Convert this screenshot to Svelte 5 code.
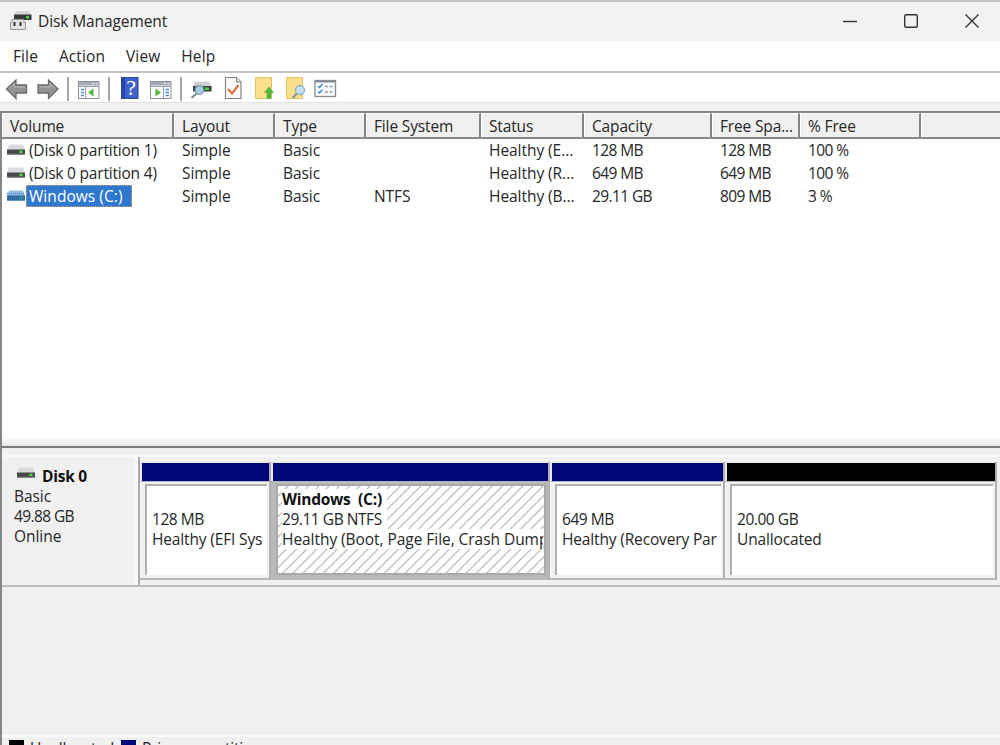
<script>
  const menus = [
    { label: 'File', left: 0 },
    { label: 'Action', left: 21 },
    { label: 'View', left: 21 },
    { label: 'Help', left: 21 },
  ]

  const tools = ['back', 'forward', '|', 'tree', '|', 'help', 'pane', '|', 'rescan', 'check', 'up', 'find', 'list']

  const columns = ['Volume', 'Layout', 'Type', 'File System', 'Status', 'Capacity', 'Free Spa...', '% Free', '']

  const volumes = [
    ['(Disk 0 partition 1)', 'Simple', 'Basic', '', 'Healthy (E...', '128 MB', '128 MB', '100 %', ''],
    ['(Disk 0 partition 4)', 'Simple', 'Basic', '', 'Healthy (R...', '649 MB', '649 MB', '100 %', ''],
    ['Windows (C:)', 'Simple', 'Basic', 'NTFS', 'Healthy (B...', '29.11 GB', '809 MB', '3 %', ''],
  ]

  const partitions = [
    { name: '', size: '128 MB', status: 'Healthy (EFI Sys', width: 131 },
    { name: 'Windows  (C:)', size: '29.11 GB NTFS', status: 'Healthy (Boot, Page File, Crash Dump', width: 279 },
    { name: '', size: '649 MB', status: 'Healthy (Recovery Par', width: 175 },
    { name: '', size: '20.00 GB', status: 'Unallocated', width: 272, free: true },
  ]

  let selected = $state(2)
</script>

{#snippet drive(active)}
  <svg class="drive" width="18" height="12" viewBox="0 0 18 12">
    <path d="M2 0.5h14L18 6H0z" fill={active ? '#8fb9df' : '#d9dade'} />
    <rect y="5.5" width="18" height="5" fill={active ? '#2b6597' : '#46484a'} />
    <rect y="9.6" width="18" height="1" fill={active ? '#3f82bd' : '#777'} />
    <rect x="12.5" y="6.600" width="3" height="2.4" fill={active ? '#239a93' : '#4fe04a'} />
    {#if active}
      <path d="M0 3.5h18M0 7.5h18" stroke="#3c8ad2" stroke-width="1" stroke-dasharray="1 1" />
    {/if}
  </svg>
{/snippet}

<div class="window">
  <header class="title">
    <svg width="22" height="21" viewBox="0 0 22 21">
      <path d="M6 1h13l2.5 4H4z" fill="#d5d6d8" />
      <rect x="4" y="4.500" width="17.500" height="5.500" fill="#37393a" />
      <rect x="16" y="6" width="3" height="2.500" fill="#43d84a" />
      <path d="M2 9.500h12v3h1.500v7H0.500v-7H2z" fill="#e3e3e3" stroke="#9a9a9a" />
      <path d="M4.500 12v4M10.500 12v4" stroke="#333" stroke-width="2" />
    </svg>
    <h1>Disk Management</h1>
    <div class="controls">
      <svg width="16" height="16" viewBox="0 0 16 16"><path d="M1 8.500h14" /></svg>
      <svg width="16" height="16" viewBox="0 0 16 16"><rect x="1.700" y="1.700" width="12.600" height="12.600" rx="1.500" /></svg>
      <svg width="16" height="16" viewBox="0 0 16 16"><path d="M1.500 1.500l13 13M14.500 1.500l-13 13" /></svg>
    </div>
  </header>

  <nav class="menu">
    {#each menus as m}
      <span style:margin-left="{m.left}px">{m.label}</span>
    {/each}
  </nav>

  <div class="toolbar">
    {#each tools as tool}
      {#if tool === '|'}
        <i class="sep"></i>
      {:else}
        <svg width="31" height="30" viewBox="0 0 31 30">
          {#if tool === 'back'}
            <path d="M5.500 16L15 7v5h10.500v8H15v5.500z" fill="#949494" stroke="#686868" stroke-width="1.300" />
            <path d="M8 15.500l5.500-5v3.500H24" fill="none" stroke="#b9b9b9" />
          {:else if tool === 'forward'}
            <path d="M26 16L16.500 7v5H6v8h10.500v5.500z" fill="#949494" stroke="#686868" stroke-width="1.300" />
            <path d="M7.500 14h10.500v-3.500l5 5" fill="none" stroke="#b9b9b9" />
          {:else if tool === 'tree'}
            <rect x="5.500" y="8.500" width="20.500" height="17" fill="#fafbfc" stroke="#8d929c" />
            <rect x="6" y="9" width="19.500" height="3.500" fill="#a4aab6" />
            <path d="M19 10.500h2M22.500 10.500h2" stroke="#eef0f4" />
            <path d="M6 13.500h19.500M12.500 14v11" stroke="#9aa0aa" />
            <path d="M8 16.500h3M8 19.500h3M8 22.500h3" stroke="#4d8ed0" stroke-width="1.500" />
            <path d="M20.500 15.500v8l-5.500-4z" fill="#55b535" />
          {:else if tool === 'help'}
            <rect x="7.500" y="4.500" width="16.500" height="21" fill="#3e62c9" stroke="#2a449f" />
            <rect x="8" y="5" width="3" height="20" fill="#2747ad" />
            <text x="17" y="22" class="question">?</text>
          {:else if tool === 'pane'}
            <rect x="5.500" y="8.500" width="20.500" height="17" fill="#fafbfc" stroke="#8d929c" />
            <rect x="6" y="9" width="19.500" height="3.500" fill="#a4aab6" />
            <path d="M19 10.500h2M22.500 10.500h2" stroke="#eef0f4" />
            <path d="M6 13.500h19.500M18.500 14v11" stroke="#9aa0aa" />
            <path d="M20.500 16.500h3.500M20.500 19.500h3.500M20.500 22.500h3.500" stroke="#4d8ed0" stroke-width="1.500" />
            <path d="M10.500 15.500v8l5.500-4z" fill="#55b535" />
          {:else if tool === 'rescan'}
            <path d="M9 8.500h14l2.500 5H7z" fill="#cfd1d4" />
            <rect x="7" y="13" width="18.500" height="5.500" fill="#3d4144" />
            <rect x="19" y="14.500" width="4" height="2.500" fill="#4bd646" />
            <path d="M10.500 20.500L5.500 25" stroke="#7e8a92" stroke-width="2.200" />
            <circle cx="13.500" cy="17" r="4.300" fill="#a9cbe3" stroke="#789ab2" stroke-width="1.300" />
          {:else if tool === 'check'}
            <path d="M8.500 4.500h11l4.500 4.500v16.500H8.500z" fill="#fafafa" stroke="#838383" stroke-width="1.200" />
            <path d="M19.500 4.500v4.500H24" fill="#ddd" stroke="#838383" />
            <path d="M11 16l4 4.500 6.500-8.500" fill="none" stroke="#e5703a" stroke-width="2.200" />
          {:else if tool === 'up'}
            <path d="M7.500 4.500h16v21h-16z" fill="#fae08a" stroke="#e3c262" />
            <path d="M21 14l4.500 5.500h-2.500v6h-4v-6h-2.500z" fill="#50b83c" stroke="#43a433" stroke-width="0.500" />
          {:else if tool === 'find'}
            <path d="M7.500 4.500h16v21h-16z" fill="#fae08a" stroke="#e3c262" />
            <path d="M18 20.500l-4.500 4.500" stroke="#8795a0" stroke-width="2.200" />
            <circle cx="21" cy="17" r="4.500" fill="#c5e0ef" stroke="#8fb0c5" stroke-width="1.300" />
          {:else if tool === 'list'}
            <rect x="5" y="7.500" width="20.500" height="16" fill="#fafbfc" stroke="#858b95" stroke-width="1.300" />
            <path d="M5 8.500h20.500" stroke="#858b95" stroke-width="2" />
            <path d="M8 13l1.500 1.500 3-3.500M8 18.500l1.500 1.500 3-3.500" fill="none" stroke="#3c90dc" stroke-width="1.500" />
            <path d="M15 13.500h3M19.500 13.500h3M15 19h3M19.500 19h3" stroke="#9aa0a8" stroke-width="1.300" />
          {/if}
        </svg>
      {/if}
    {/each}
  </div>

  <main>
    <section class="volumes">
      <div class="row head">
        {#each columns as column}
          <div class="th">{column}</div>
        {/each}
      </div>
      {#each volumes as volume, i}
        <div class="row" class:active={i === selected} onclick={() => (selected = i)} role="presentation">
          {#each volume as cell, j}
            {#if j === 0}
              <div class="td name">{@render drive(i === selected)}<span>{cell}</span></div>
            {:else}
              <div class="td" class:num={j > 4}>{cell}</div>
            {/if}
          {/each}
        </div>
      {/each}
    </section>

    <div class="splitter"></div>

    <section class="disks">
      <div class="disk">
        <div class="info">
          <div class="disk-name">{@render drive(false)}<b>Disk 0</b></div>
          <div>Basic</div>
          <div class="num">49.88 GB</div>
          <div>Online</div>
        </div>
        <div class="parts">
          {#each partitions as part}
            <div class="part" class:selected={part.name} style:width="{part.width}px">
              <div class="bar" class:free={part.free}></div>
              <div class="frame">
                <div class="box">
                  {#if part.name}
                    <svg class="hatch" width="100%" height="100%">
                      <pattern id="hatch" width="10.200" height="10.200" patternUnits="userSpaceOnUse">
                        <path d="M-1 11.200L11.200 -1M-1 1L1 -1M9.200 11.200l2-2" stroke="#a8a8a8" stroke-width="1" />
                      </pattern>
                      <rect width="100%" height="100%" fill="url(#hatch)" />
                    </svg>
                  {/if}
                  <div class="lines">
                    <b>{part.name}</b>
                    <span class="num">{part.size}</span>
                    <span>{part.status}</span>
                  </div>
                </div>
              </div>
            </div>
          {/each}
        </div>
      </div>
    </section>

    <footer>
      <i class="swatch"></i><span class="first">Unallocated</span>
      <i class="swatch primary"></i><span>Primary partition</span>
    </footer>
  </main>
</div>

<style>
  :global(body) {
    margin: 0;
    overflow: hidden;
  }

  .window {
    box-sizing: border-box;
    width: 1000px;
    height: 745px;
    display: flex;
    flex-direction: column;
    overflow: hidden;
    background: #f0f0f0;
    color: #262626;
    font: 15.5px/20px "Open Sans", "Noto Sans", sans-serif;
    letter-spacing: -0.05px;
    white-space: nowrap;
  }

  .window > *,
  main > * {
    flex-shrink: 0;
  }

  .title {
    box-sizing: border-box;
    height: 41px;
    display: flex;
    align-items: center;
    padding: 0 20px 2px 10px;
    border-top: 2px solid #c6c6c6;
    background: #f2f2f2;
  }

  h1 {
    margin: 0 0 0 6px;
    font-size: 15.5px;
    font-weight: 400;
    letter-spacing: -0.1px;
  }

  .controls {
    display: flex;
    gap: 45px;
    margin-left: auto;
  }

  .controls svg {
    fill: none;
    stroke: #333;
    stroke-width: 1.4;
  }

  .menu {
    display: flex;
    align-items: center;
    height: 30px;
    padding-left: 13px;
    background: #fff;
    letter-spacing: 0.1px;
  }

  .toolbar {
    box-sizing: border-box;
    height: 32px;
    display: flex;
    padding-left: 1px;
    border-top: 2px solid #c4c5c0;
    border-bottom: 1px solid #e2e2e2;
    background: #fff;
  }

  .sep {
    width: 2px;
    height: 24px;
    margin: 4px 4px 0;
    background: #a5a5a5;
  }

  .question {
    fill: #fff;
    font: 22px "Liberation Serif", serif;
    text-anchor: middle;
  }

  main {
    flex: 1;
    display: flex;
    flex-direction: column;
    margin-top: 8px;
    border-left: 2px solid #868686;
    border-top: 2px solid #868686;
  }

  .volumes {
    box-sizing: border-box;
    height: 325px;
    background: #fff;
  }

  .row {
    display: grid;
    grid-template-columns: 172px 101px 91px 115px 103px 128px 88px 121px 1fr;
    height: 22.7px;
    align-items: center;
  }

  .head {
    height: 26px;
    align-items: stretch;
    box-sizing: border-box;
    border-bottom: 2px solid #8a8a8a;
    background: #f0f0f0;
  }

  .th {
    padding: 2px 0 0 7px;
    border-right: 2px solid #858585;
    border-left: 1px solid #fff;
    border-top: 1px solid #fff;
    letter-spacing: -0.15px;
  }

  .th:last-child {
    border-right: 0;
  }

  .td {
    padding-left: 8px;
  }

  .num {
    letter-spacing: -0.6px;
  }

  .name {
    display: flex;
    align-items: center;
    padding-left: 5px;
    letter-spacing: -0.2px;
  }

  .name span {
    box-sizing: border-box;
    height: 22px;
    margin-left: 1px;
    padding: 0 7px 0 2px;
    border: 1px solid transparent;
  }

  .active .name span {
    padding-right: 8px;
    background: #2f78d0;
    border: 1px dotted #d9a066;
    color: #fff;
    letter-spacing: 0.05px;
  }

  .splitter {
    box-sizing: border-box;
    height: 10px;
    border-bottom: 2px solid #7c7c7c;
    background: linear-gradient(#fbfbfb, #f3f3f3 50%, #e6e6e6);
  }

  .disks {
    height: 287px;
    padding-top: 7px;
    box-sizing: border-box;
  }

  .disk {
    box-sizing: border-box;
    display: flex;
    height: 132px;
    border-top: 2px solid #f9f9f9;
    border-bottom: 2px solid #bcbcbc;
  }

  .info {
    box-sizing: border-box;
    width: 138px;
    padding: 8px 0 0 12px;
    border-right: 2px solid #a9a9a9;
    box-shadow: inset -4px 0 0 #f8f8f8;
  }

  .info .drive {
    margin: 0 7px 5px 3px;
  }

  .disk-name {
    display: flex;
    align-items: center;
    height: 21px;
  }

  b {
    color: #111;
    letter-spacing: -0.25px;
    white-space: pre;
  }

  .parts {
    display: flex;
    padding-top: 5px;
  }

  .part {
    box-sizing: border-box;
    height: 118px;
    border-right: 2px solid #b0b0b0;
    border-bottom: 2px solid #b9b9b9;
  }

  .bar {
    box-sizing: border-box;
    height: 19px;
    border: solid #e8e8e8;
    border-width: 1px 0 0 2px;
    background: #000779;
  }

  .free {
    background: #000;
  }

  .frame {
    box-sizing: border-box;
    height: 97px;
    padding: 2px 2px 3px 4px;
    border-top: 1px solid #b4b4b4;
    border-left: 1px solid #fafafa;
  }

  .box {
    box-sizing: border-box;
    height: 91px;
    display: grid;
    grid-template: 100% / 100%;
    overflow: hidden;
    border: solid #b0b0b0;
    border-width: 2px 0 0 2px;
    background: #fff;
  }

  .lines {
    display: flex;
    flex-direction: column;
    align-items: flex-start;
    grid-area: 1 / 1;
    padding: 3px 4px 0 5px;
    overflow: hidden;
    letter-spacing: -0.15px;
  }

  .lines > * {
    max-width: 100%;
    height: 20px;
    overflow: hidden;
  }

  .lines .num {
    letter-spacing: -0.45px;
  }

  .hatch {
    grid-area: 1 / 1;
  }

  .selected .frame {
    background: #b9b9b9;
    border-left-color: #b9b9b9;
    padding-left: 4px;
  }

  .selected .box {
    border: 2px solid #a9a9a9;
  }

  .selected .lines {
    padding: 3px 1px 0 4px;
    letter-spacing: -0.05px;
  }

  .selected .lines > * {
    box-sizing: border-box;
    padding-right: 5px;
    background: #fff;
  }

  .selected .lines > :last-child {
    padding-right: 0;
  }

  footer {
    box-sizing: border-box;
    display: flex;
    align-items: flex-start;
    height: 10px;
    padding: 3px 0 0 7px;
    border-top: 2px solid #fbfbfb;
    line-height: 16px;
    letter-spacing: -0.2px;
    overflow: hidden;
  }

  .swatch {
    width: 15px;
    height: 15px;
    margin-right: 6px;
    background: #000;
  }

  .primary {
    background: #000779;
  }

  .first {
    width: 91px;
  }
</style>
